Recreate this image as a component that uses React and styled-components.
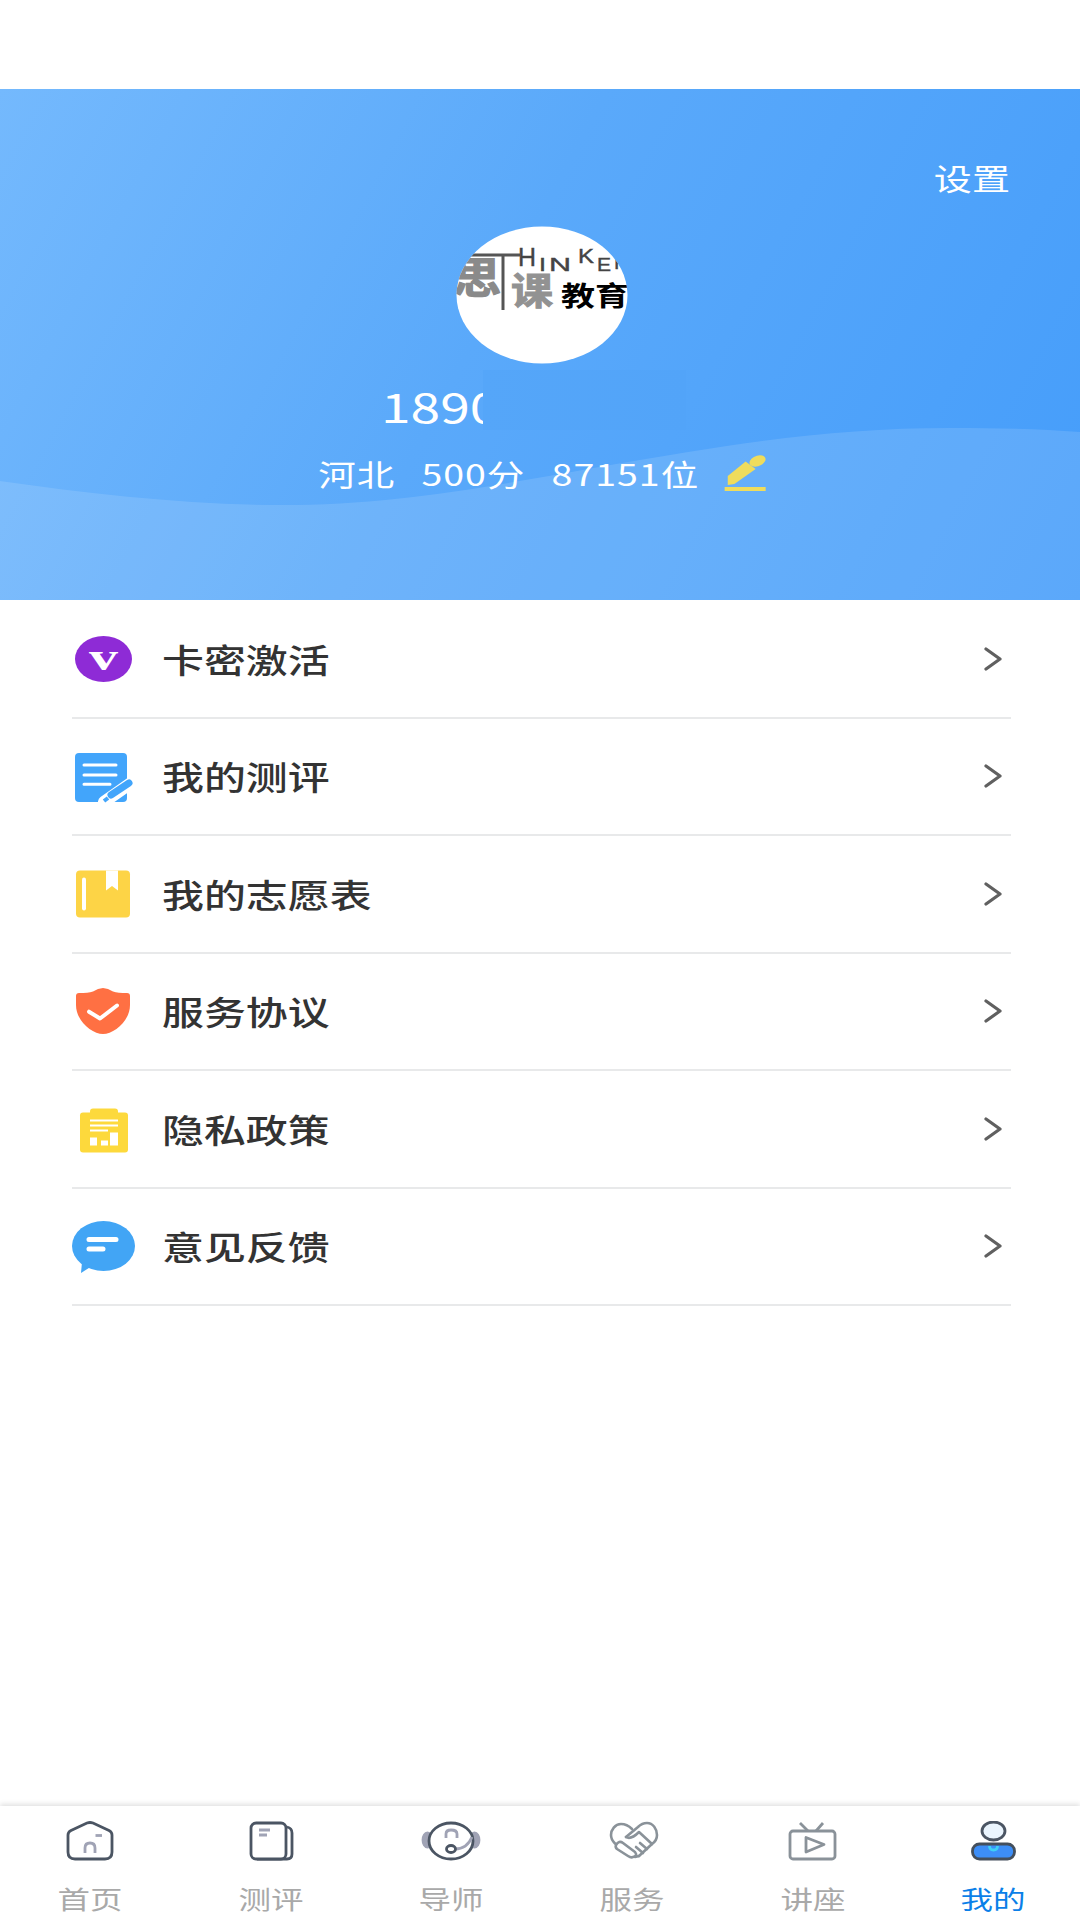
import React from 'react';
import styled, { createGlobalStyle } from 'styled-components';

const GlobalStyle = createGlobalStyle`
  html, body {
    margin: 0;
    padding: 0;
    background: #fff;
    font-family: "Noto Sans CJK SC", "Noto Sans", sans-serif;
  }
`;

const Page = styled.div`
  width: 1080px;
  height: 1920px;
  display: flex;
  flex-direction: column;
  overflow: hidden;
  background: #fff;
`;

const StatusGap = styled.div`
  height: 89px;
  flex: none;
`;

const Header = styled.header`
  position: relative;
  height: 511px;
  flex: none;
  display: flex;
  flex-direction: column;
  background: linear-gradient(118deg, #74b9fd 0%, #5aa9fa 45%, #459dfa 100%);
  color: #fff;
  overflow: hidden;
`;

const Wave = styled.svg`
  position: absolute;
  left: 0;
  top: 0;
`;

const Settings = styled.div`
  position: relative;
  align-self: flex-end;
  margin: 73px 70px 0 0;
  font-size: 30px;
  line-height: 30px;
  transform: scaleX(1.27);
  transform-origin: right center;
`;

const Avatar = styled.svg`
  position: relative;
  display: block;
  margin: 34px 0 0 456px;
`;

const Phone = styled.div`
  position: relative;
  margin: 25px 0 0 381px;
  font-size: 41px;
  line-height: 32px;
  transform: scaleX(1.3);
  transform-origin: left center;
`;

const PhoneMask = styled.div`
  position: absolute;
  left: 483px;
  top: 281px;
  width: 203px;
  height: 60px;
  background: linear-gradient(90deg, #55a6f9, #52a4f9);
`;

const InfoLine = styled.div`
  position: relative;
  align-self: center;
  margin: 34px 0 0 4px;
  display: flex;
  align-items: center;
  gap: 21px;
  font-size: 30px;
  line-height: 36px;
  letter-spacing: 0.8px;
  transform: scaleX(1.25);
`;

const EditIcon = styled.svg`
  margin-left: -1px;
`;

const Menu = styled.ul`
  list-style: none;
  margin: 0;
  padding: 1px 69px 0 72px;
  flex: 1;
`;

const MenuRow = styled.li`
  height: 117.5px;
  box-sizing: border-box;
  display: flex;
  align-items: center;
  border-bottom: 2px solid #e8e9ea;
`;

const MenuIcon = styled.svg`
  flex: none;
  width: 66px;
  height: 56px;
  margin-right: 24px;
`;

const MenuLabel = styled.span`
  font-size: 33px;
  font-weight: 500;
  color: #333;
  transform: scaleX(1.27);
  transform-origin: left center;
`;

const Chevron = styled.svg`
  margin-left: auto;
  margin-right: 9px;
`;

const TabBar = styled.nav`
  height: 114px;
  flex: none;
  display: grid;
  grid-template-columns: repeat(6, 180.6px);
  box-shadow: 0 -2px 5px rgba(0, 0, 0, 0.12);
  background: #fff;
  position: relative;
`;

const Tab = styled.div`
  display: flex;
  flex-direction: column;
  align-items: center;
  padding-top: 15px;
`;

const TabIcon = styled.svg`
  width: 60px;
  height: 40px;
  fill: none;
`;

const TabLabel = styled.span`
  margin-top: 22px;
  font-size: 25px;
  line-height: 30px;
  color: ${(p) => (p.$active ? '#0b7fe8' : '#a9a9a9')};
  transform: scaleX(1.3);
`;

const VipIcon = () => (
  <MenuIcon viewBox="0 0 66 56">
    <ellipse cx="31.5" cy="28" rx="28.5" ry="23" fill="#8e2bd6" />
    <text x="17" y="39" fontFamily="Liberation Serif" fontWeight="700" fontSize="38" fill="#fff" textLength="29" lengthAdjust="spacingAndGlyphs">v</text>
  </MenuIcon>
);

const ReviewIcon = () => (
  <MenuIcon viewBox="0 0 66 56">
    <rect x="3" y="5" width="52" height="49" rx="4" fill="#42a5fb" />
    <path d="M12 17H44M12 27H44M12 36.3H38" stroke="#fff" strokeWidth="3" strokeLinecap="round" />
    <path d="M32 54L59 35" stroke="#fff" strokeWidth="12" strokeLinecap="round" />
    <path d="M39 47L57 35" stroke="#42a5fb" strokeWidth="7" strokeLinecap="round" />
    <path d="M32 53L36 50" stroke="#42a5fb" strokeWidth="4" />
  </MenuIcon>
);

const WishIcon = () => (
  <MenuIcon viewBox="0 0 66 56">
    <rect x="4" y="4.500" width="54" height="47" rx="4" fill="#fdd446" />
    <rect x="10" y="11.500" width="4" height="33" rx="2" fill="#fff" />
    <polygon points="34,4.500 46,4.500 46,24.500 40,20 34,24.500" fill="#fff" />
  </MenuIcon>
);

const ShieldIcon = () => (
  <MenuIcon viewBox="0 0 66 56">
    <path d="M31 5Q36 5 41 8.500Q46 10 55 10Q58 10 58 13V22C58 38 42 51 31 51C20 51 4 38 4 22V13Q4 10 7 10Q16 10 21 8.500Q26 5 31 5Z" fill="#ff7043" />
    <polyline points="17,28.700 28,35.500 45,22.500" fill="none" stroke="#fff" strokeWidth="4" strokeLinecap="round" strokeLinejoin="round" />
  </MenuIcon>
);

const PrivacyIcon = () => (
  <MenuIcon viewBox="0 0 66 56">
    <rect x="8" y="11.500" width="48" height="40" rx="3" fill="#fdd93c" />
    <rect x="18" y="7.500" width="28" height="10" rx="3" fill="#fdd93c" />
    <path d="M18 19.500H46M18 24.500H46M18 29.500H36" stroke="#fff" strokeWidth="2" />
    <rect x="18" y="36.500" width="7" height="8" fill="#fff" />
    <rect x="29" y="39.500" width="7" height="5" fill="#fff" />
    <rect x="38" y="31.500" width="8" height="13" fill="#fff" />
  </MenuIcon>
);

const FeedbackIcon = () => (
  <MenuIcon viewBox="0 0 66 56">
    <ellipse cx="31.500" cy="28" rx="31.500" ry="25" fill="#42a5f5" />
    <polygon points="9,55 20,48 10,44" fill="#42a5f5" />
    <path d="M17 21.500H44M17 31H31" stroke="#fff" strokeWidth="5" strokeLinecap="round" />
  </MenuIcon>
);

const HomeIcon = () => (
  <TabIcon viewBox="0 0 60 40">
    <path d="M8 14Q8 11 11 9.500L27 2Q30 1 33 2L49 9.500Q52 11 52 14V31Q52 38 45 38H15Q8 38 8 31Z" stroke="#4b5563" strokeWidth="2.800" />
    <path d="M35.500 14.500H42" stroke="#a0a3b5" strokeWidth="2.800" />
    <path d="M25 32V27Q25 22 30 22Q35 22 35 27V32" stroke="#a0a3b5" strokeWidth="2.800" />
  </TabIcon>
);

const TestIcon = () => (
  <TabIcon viewBox="0 0 60 40">
    <path d="M46 6Q51 7 51 12V33Q51 38 46 38H16" stroke="#4b5563" strokeWidth="2.800" />
    <rect x="10" y="2" width="35" height="36" rx="5" fill="#fff" stroke="#4b5563" strokeWidth="2.800" />
    <path d="M18 9H29M18 14H26" stroke="#a0a3b5" strokeWidth="2.800" />
  </TabIcon>
);

const MentorIcon = () => (
  <TabIcon viewBox="0 0 60 40">
    <ellipse cx="6.500" cy="19" rx="4.500" ry="7" fill="#a0a3b5" stroke="#a0a3b5" strokeWidth="2.800" />
    <ellipse cx="53.500" cy="19" rx="4.500" ry="7" fill="#a0a3b5" stroke="#a0a3b5" strokeWidth="2.800" />
    <ellipse cx="30" cy="20" rx="22" ry="18" fill="#fff" stroke="#4b5563" strokeWidth="2.800" />
    <path d="M25 17V13Q25 9 30 9Q36 9 36 13V17" stroke="#a0a3b5" strokeWidth="2.800" />
    <path d="M34 28Q46 28 51 16" stroke="#a0a3b5" strokeWidth="2.800" />
    <ellipse cx="30" cy="28" rx="4.500" ry="3.500" stroke="#4b5563" strokeWidth="2.800" />
  </TabIcon>
);

const ServiceIcon = () => (
  <TabIcon viewBox="0 0 60 40">
    <g stroke="#8a9299" strokeWidth="2.600" strokeLinejoin="round" strokeLinecap="round">
      <path d="M30 8C26 4 22 3 19 3C13 3 9 9 9 14C9 18 10.500 20 13 22.500" />
      <path d="M24 16L36 6C39 3 42 2 45 2C51 2 55 8 55 14C55 18 53 21 50 23L37 35" />
      <path d="M14 24Q17 19 21 22L33 31Q36 35 31 36Q29 37 26 35L15 28Q13 26 14 24Z" />
      <path d="M24 16Q29 19 37 11L50 23" />
      <path d="M38 22L45 28M34 26L41 32M33 36L37 35" />
    </g>
  </TabIcon>
);

const LectureIcon = () => (
  <TabIcon viewBox="0 0 60 40">
    <rect x="7" y="10" width="45" height="28" rx="3" stroke="#8a9299" strokeWidth="2.800" />
    <path d="M17 2L25 10M40 2L33 10" stroke="#8a9299" strokeWidth="2.800" />
    <path d="M23 16.500V31L41 23.500Z" stroke="#8a9299" strokeWidth="2.800" strokeLinejoin="round" />
  </TabIcon>
);

const MineIcon = () => (
  <TabIcon viewBox="0 0 60 40">
    <ellipse cx="30.500" cy="10" rx="11.500" ry="9" fill="#eaf4fd" stroke="#4b5563" strokeWidth="2.800" />
    <rect x="9.500" y="23" width="42" height="15" rx="7" fill="#3d8ef7" stroke="#444f5c" strokeWidth="2.800" />
    <path d="M26.500 25Q26.500 29 30.500 29Q34.500 29 34.500 25" stroke="#3fd0f5" strokeWidth="2.800" />
  </TabIcon>
);

const MENU_ITEMS = [
  { label: '卡密激活', Icon: VipIcon },
  { label: '我的测评', Icon: ReviewIcon },
  { label: '我的志愿表', Icon: WishIcon },
  { label: '服务协议', Icon: ShieldIcon },
  { label: '隐私政策', Icon: PrivacyIcon },
  { label: '意见反馈', Icon: FeedbackIcon },
];

const TABS = [
  { label: '首页', Icon: HomeIcon },
  { label: '测评', Icon: TestIcon },
  { label: '导师', Icon: MentorIcon },
  { label: '服务', Icon: ServiceIcon },
  { label: '讲座', Icon: LectureIcon },
  { label: '我的', Icon: MineIcon, active: true },
];

const App = () => (
  <Page>
    <GlobalStyle />
    <StatusGap />
    <Header>
      <Wave width="1080" height="511" viewBox="0 0 1080 511">
        <path
          d="M0 392C90 405 190 416 280 416C420 416 520 390 688 363C780 348 860 339 950 339C1000 339 1040 340 1080 343V511H0Z"
          fill="rgba(255,255,255,0.12)"
        />
      </Wave>
      <Settings>设置</Settings>
      <Avatar width="172" height="138" viewBox="0 0 172 138">
        <defs>
          <clipPath id="avatar-clip">
            <ellipse cx="86" cy="69" rx="85.500" ry="68.500" />
          </clipPath>
        </defs>
        <ellipse cx="86" cy="69" rx="85.500" ry="68.500" fill="#fff" />
        <g clipPath="url(#avatar-clip)">
          <path d="M0 29H64M47 29V84" stroke="#555" strokeWidth="3" />
          <text x="-3" y="67" fontFamily="Noto Sans CJK SC" fontWeight="700" fontSize="42" fill="#8a8a8a" stroke="#8a8a8a" strokeWidth="1.200" textLength="48" lengthAdjust="spacingAndGlyphs">思</text>
          <text x="55" y="79" fontFamily="Noto Sans CJK SC" fontWeight="700" fontSize="37" fill="#929292" stroke="#929292" strokeWidth="1" textLength="42" lengthAdjust="spacingAndGlyphs">课</text>
          <text x="105" y="80" fontFamily="Noto Sans CJK SC" fontWeight="700" fontSize="27" fill="#000" textLength="68" lengthAdjust="spacingAndGlyphs">教育</text>
          <g fontFamily="Liberation Sans" fill="#444" stroke="#444" strokeWidth="0.400">
            <text x="62" y="40" fontSize="25" textLength="18" lengthAdjust="spacingAndGlyphs">H</text>
            <text x="83" y="45" fontSize="18" textLength="7" lengthAdjust="spacingAndGlyphs">I</text>
            <text x="93" y="45" fontSize="18" textLength="22" lengthAdjust="spacingAndGlyphs">N</text>
            <text x="122" y="37" fontSize="21" textLength="16" lengthAdjust="spacingAndGlyphs">K</text>
            <text x="141" y="45" fontSize="18" textLength="14" lengthAdjust="spacingAndGlyphs">E</text>
            <text x="158" y="43" fontSize="18" textLength="15" lengthAdjust="spacingAndGlyphs">R</text>
          </g>
        </g>
      </Avatar>
      <Phone>1890</Phone>
      <PhoneMask />
      <InfoLine>
        <span>河北</span>
        <span>500分</span>
        <span>87151位</span>
        <EditIcon width="34" height="36" viewBox="0 -1 34 36">
          <rect x="0" y="31" width="33" height="4" fill="#efdc5c" />
          <polygon points="2.700,29 2.700,20 17,5.500 25,13 8,28" fill="#efdc5c" />
          <ellipse cx="26.500" cy="5" rx="7" ry="5" transform="rotate(-35 26.500 5)" fill="#efdc5c" />
        </EditIcon>
      </InfoLine>
    </Header>
    <Menu>
      {MENU_ITEMS.map(({ label, Icon }) => (
        <MenuRow key={label}>
          <Icon />
          <MenuLabel>{label}</MenuLabel>
          <Chevron width="18" height="24" viewBox="0 0 18 24" fill="none">
            <polyline points="2,2 16,12 2,22" stroke="#606060" strokeWidth="3.200" strokeLinecap="round" strokeLinejoin="round" />
          </Chevron>
        </MenuRow>
      ))}
    </Menu>
    <TabBar>
      {TABS.map(({ label, Icon, active }) => (
        <Tab key={label}>
          <Icon />
          <TabLabel $active={active}>{label}</TabLabel>
        </Tab>
      ))}
    </TabBar>
  </Page>
);

export default App;
